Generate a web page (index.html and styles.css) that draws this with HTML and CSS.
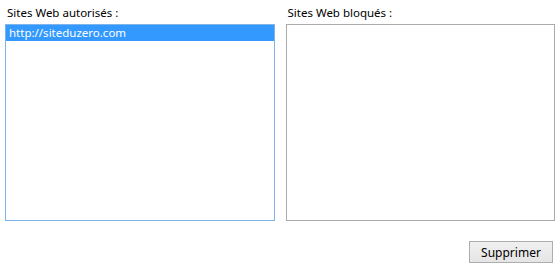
FILE: index.html
```html
<!DOCTYPE html>
<html>
<head>
    <title>Sites Web</title>
    <link rel="stylesheet" href="styles.css">
</head>
<body>
    <div class="lists">
        <div class="column">
            <label class="caption">Sites Web autorisés :</label>
            <ul class="listbox focused">
                <li class="selected">http://siteduzero.com</li>
            </ul>
        </div>
        <div class="column">
            <label class="caption">Sites Web bloqués :</label>
            <ul class="listbox"></ul>
        </div>
    </div>
    <div class="actions">
        <button class="btn">Supprimer</button>
    </div>
</body>
</html>
```

FILE: styles.css
```css
body {
    margin: 0;
    padding: 0 5px;
    font-family: "Noto Sans", "Open Sans", sans-serif;
    font-size: 11.5px;
    color: #000;
    background: #fff;
}

.lists {
    display: flex;
    gap: 11px;
}

.column {
    width: 270px;
}

.caption {
    display: block;
    height: 16px;
    line-height: 16px;
    padding: 5px 0 3px 2px;
}

.listbox {
    list-style-type: none;
    margin: 0;
    padding: 0;
    height: 195px;
    border: 1px solid #ababab;
}

.listbox.focused {
    border-color: #7eb4ea;
}

.listbox li {
    height: 16px;
    line-height: 16px;
    padding-left: 3px;
}

.listbox li.selected {
    background-color: #3399ff;
    color: #fff;
}

.actions {
    display: flex;
    justify-content: flex-end;
    padding: 20px 2px 0 0;
}

.btn {
    width: 84px;
    height: 22px;
    font-family: inherit;
    font-size: 12px;
    color: #000;
    background: linear-gradient(#f0f0f0, #e5e5e5);
    border: 1px solid #adadad;
    padding: 0;
}
```
